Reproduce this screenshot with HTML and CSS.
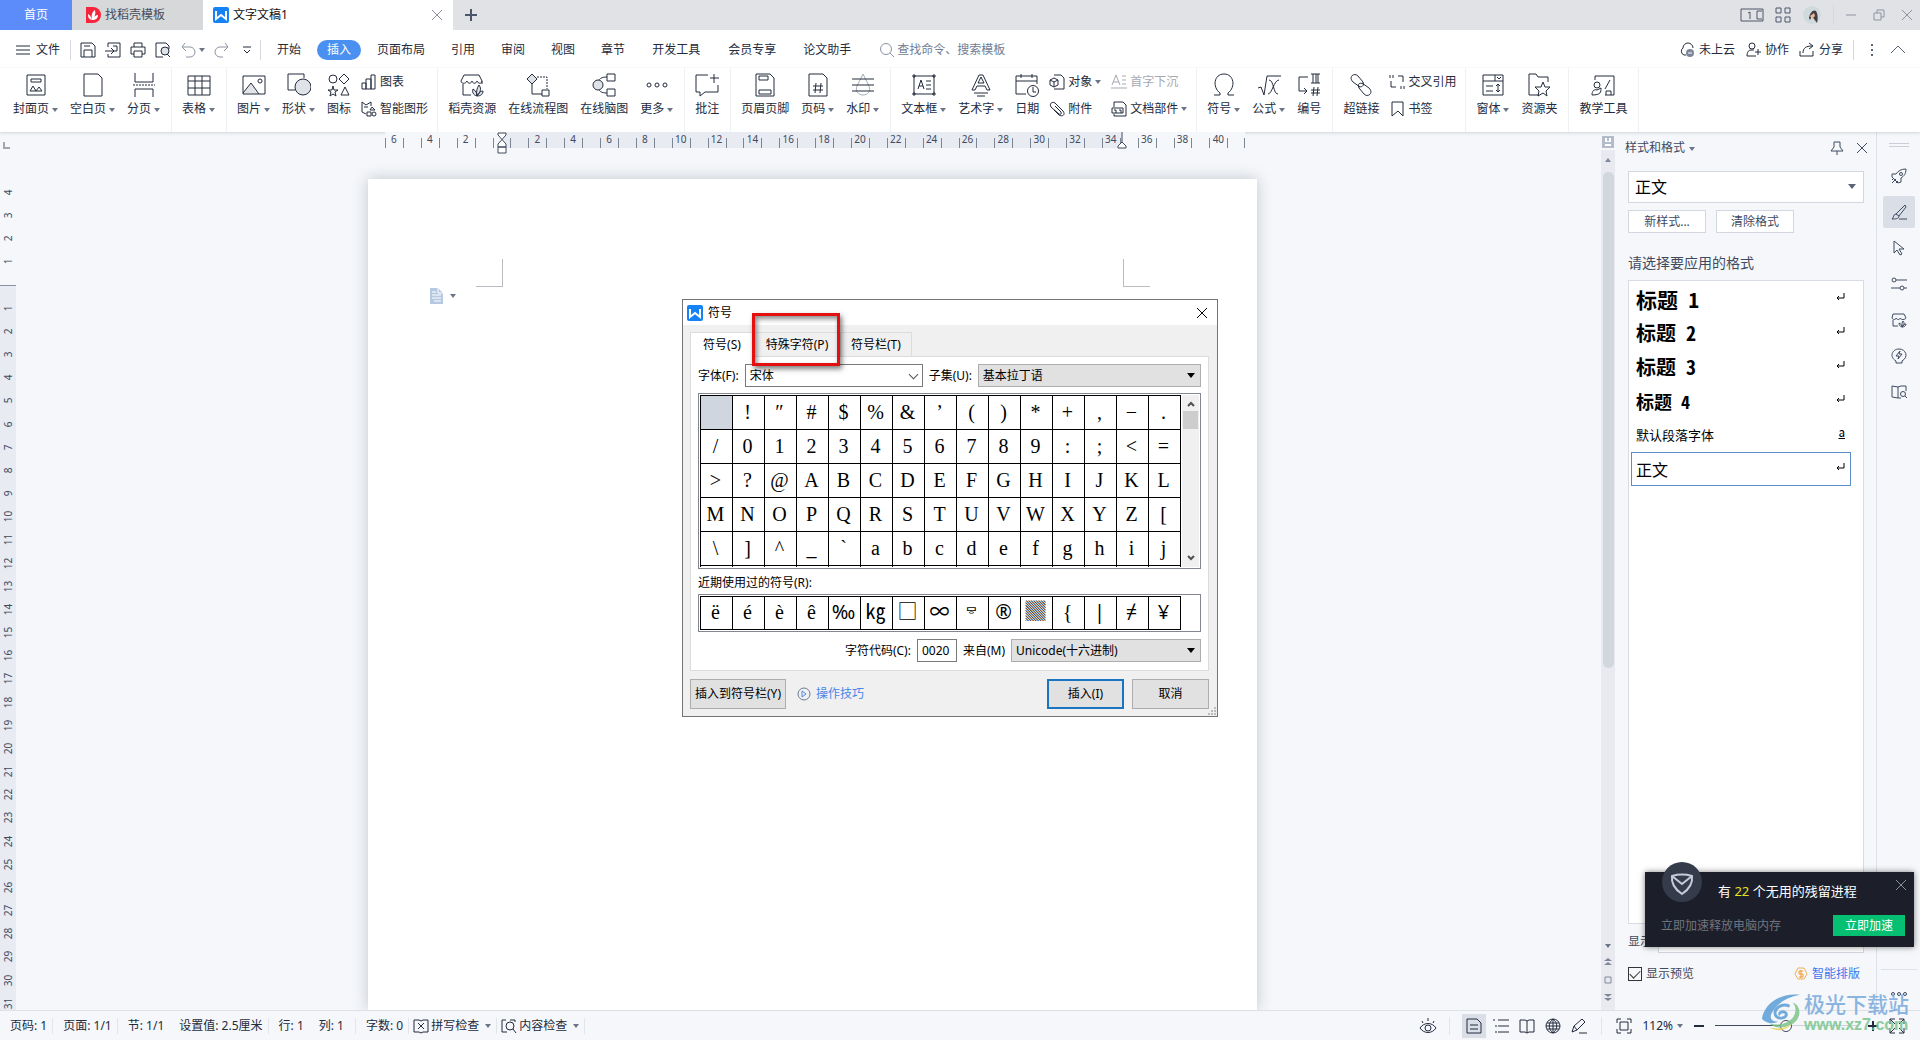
FILE: index.html
```html
<!DOCTYPE html>
<html lang="zh-CN">
<head>
<meta charset="utf-8">
<title>文字文稿1</title>
<link rel="stylesheet" href="styles.css">
</head>
<body>
<div class="app">
  <header class="titlebar">
    <button class="tab tab-home">首页</button>
    <button class="tab tab-docer"><svg class="i16" viewBox="0 0 16 16"><path d="M1 0h7a8 8 0 0 1 0 16H1z" fill="#f5263c"/><path d="M7 13C3 12 3 9 3 7c2 1 3 3 4 6C6 8 7 5 10 3c1 4 0 6-3 10 2-4 4-5 6-5 0 3-2 5-6 5z" fill="#fff"/></svg>找稻壳模板</button>
    <button class="tab tab-doc"><svg class="i16" viewBox="0 0 16 16"><rect width="16" height="16" rx="2" fill="#1583f5"/><path d="M3 4v8l5-4 5 4V4" fill="none" stroke="#fff" stroke-width="2"/></svg><span class="grow">文字文稿1</span><svg class="i12 dim" viewBox="0 0 12 12"><path d="M1 1l10 10M11 1L1 11"/></svg></button>
    <button class="tab tab-new" aria-label="新建"><svg class="i12" viewBox="0 0 12 12"><path d="M6 0v12M0 6h12" stroke-width="2"/></svg></button>
    <div class="window-tools">
      <svg class="i24" viewBox="0 0 24 16"><path d="M1 2h22v12H1zM8 6l2-1v7M22 4h-5v8h5"/></svg>
      <svg class="i16" viewBox="0 0 16 16"><path d="M1 1h5v5H1zM10 1h5v5h-5zM1 10h5v5H1zM10 10h5v5h-5z"/></svg>
      <svg class="i20" viewBox="0 0 20 20"><circle cx="10" cy="10" r="9" fill="#cfdadd" stroke="none"/><path d="M7 13c1-5 4-9 7-7 2 3 2 9 1 12l-3-4-2-3-2 4z" fill="#453a3d" stroke="none"/><path d="M8 11l4-3 1 3-3 3z" fill="#e6b9a3" stroke="none"/></svg>
      <i class="vline"></i>
      <svg class="i12 dim" viewBox="0 0 12 12"><path d="M1 6h10"/></svg>
      <svg class="i12 dim" viewBox="0 0 12 12"><path d="M1 4h7v7H1zM4 4V1h7v7H8"/></svg>
      <svg class="i12 dim" viewBox="0 0 12 12"><path d="M1 1l10 10M11 1L1 11"/></svg>
    </div>
  </header>

  <nav class="menubar">
    <button class="file"><svg class="i16" viewBox="0 0 16 16"><path d="M1 4h14M1 8h14M1 12h14"/></svg>文件</button>
    <i class="vline"></i>
    <div class="quick">
      <svg class="i16" viewBox="0 0 16 16"><path d="M1 1h11l3 3v11H1zM4 15V8h8v7M4 4h6"/></svg>
      <svg class="i16" viewBox="0 0 16 16"><path d="M3 5V1h12v14H3v-3M0 9h8M6 6l3 3-3 3M8 4h4v5H9"/></svg>
      <svg class="i16" viewBox="0 0 16 16"><path d="M4 5V1h8v4M4 12H1V5h14v7h-3M4 9h8v6H4z"/></svg>
      <svg class="i16" viewBox="0 0 16 16"><path d="M14 7V4l-3-3H1v14h7"/><circle cx="10" cy="9" r="4" fill="#dfe2e7"/><path d="M12 12l3 3"/></svg>
      <span class="undo"><svg class="i16 dim" viewBox="0 0 16 16"><path d="M5 1L2 5l4 4M2 5h8a5 5 0 0 1 0 10H6"/></svg><b class="caret"></b></span>
      <svg class="i16 dim" viewBox="0 0 16 16"><path d="M11 1l3 4-4 4M14 5H6a5 5 0 0 0 0 10h3"/></svg>
      <svg class="i8" viewBox="0 0 8 8"><path d="M0 1h8M1 4l3 3 3-3"/></svg>
    </div>
    <i class="vline"></i>
    <div class="menus">
      <button>开始</button><button class="on">插入</button><button>页面布局</button><button>引用</button><button>审阅</button><button>视图</button><button>章节</button><button class="wide">开发工具</button><button class="wide">会员专享</button><button>论文助手</button>
    </div>
    <label class="search"><svg class="i16" viewBox="0 0 16 16"><circle cx="7" cy="7" r="5.500"/><path d="M11 11l4 4"/></svg><input type="text" placeholder="查找命令、搜索模板"></label>
    <div class="share">
      <button><svg class="i16" viewBox="0 0 16 16"><path d="M5 13a4 4 0 0 1-1-7 5 5 0 0 1 10 0M5 13h2"/><circle cx="11" cy="11" r="4" fill="#7d879c" stroke="none"/><path d="M9 11h4" stroke="#fff"/></svg>未上云</button>
      <button><svg class="i16" viewBox="0 0 16 16"><circle cx="7" cy="4" r="3"/><path d="M9 8H6c-3 0-4 3-4 6h9M13 7v6M10 10h6"/></svg>协作</button>
      <button><svg class="i16" viewBox="0 0 16 16"><path d="M1 9v5h13V9M4 11c0-5 3-7 9-7M10 1l4 3-4 3"/></svg>分享</button>
      <i class="vline"></i>
      <svg class="i16" viewBox="0 0 16 16"><path d="M8 2v2M8 7v2M8 12v2" stroke-width="2"/></svg>
      <svg class="i16" viewBox="0 0 16 16"><path d="M1 11l7-7 7 7"/></svg>
    </div>
  </nav>

  <section class="ribbon">
    <div class="group">
      <button class="tool"><svg viewBox="0 0 24 24"><path d="M3 2h18v20H3zM7 6h10v3H7zM6 18l3-5 3 5zM12 18l3-4 3 4z"/></svg><span>封面页<b class="caret"></b></span></button>
      <button class="tool"><svg viewBox="0 0 24 24"><path d="M3 1h14l4 4v18H3z"/></svg><span>空白页<b class="caret"></b></span></button>
      <button class="tool"><svg viewBox="0 0 24 24"><path d="M3 0v9h18V0M3 24v-8h18v8"/><path d="M1 12h22" stroke-dasharray="2 1"/></svg><span>分页<b class="caret"></b></span></button>
    </div>
    <div class="group">
      <button class="tool"><svg viewBox="0 0 24 24"><path d="M1 3h22v19H1zM1 8h22M1 15h22M8 3v19M15 3v19"/></svg><span>表格<b class="caret"></b></span></button>
    </div>
    <div class="group">
      <button class="tool"><svg viewBox="0 0 24 24"><path d="M1 20l8-10 8 11" fill="#e3e5e8"/><path d="M1 3h22v18H1z"/><circle cx="18" cy="8" r="2"/></svg><span>图片<b class="caret"></b></span></button>
      <button class="tool"><svg viewBox="0 0 24 24"><path d="M8 17H1V1h16v4"/><circle cx="16" cy="14" r="8" fill="#dfe2e6"/></svg><span>形状<b class="caret"></b></span></button>
      <button class="tool"><svg viewBox="0 0 24 24"><circle cx="6" cy="6" r="4"/><path d="M17 1l5 5-5 5-5-5zM6 13l1 4h4l-3 2 1 4-3-2-3 2 1-4-3-2h4zM18 14l4 8h-8z"/></svg><span>图标</span></button>
      <div class="stack">
        <button><svg class="i16" viewBox="0 0 16 16"><path d="M1 9h4v6H1zM5 5h5v10H5zM10 1h4v14h-4z"/></svg>图表</button>
        <button><svg class="i16" viewBox="0 0 16 16"><path d="M1 11V1l4 3 5-3v4M1 11l4 2M3 6h4M11 6l-2 3h5zM6 11h4v4H6z"/><circle cx="13" cy="13" r="2"/></svg>智能图形</button>
      </div>
    </div>
    <div class="group">
      <button class="tool"><svg viewBox="0 0 24 24"><path d="M3 11v11h8M1 8l3-6h15l3 6c0 3-4 3-5 0-1 3-4 3-5 0-1 3-4 3-5 0-1 3-6 3-6 0M22 8v3"/><path d="M17 23c-4-1-5-4-4-7 3 2 4 4 4 7-1-5 0-8 2-11 3 4 1 8-2 11 2-4 4-5 6-5 0 3-2 5-6 5" fill="#dfe2e6"/></svg><span>稻壳资源</span></button>
      <button class="tool"><svg viewBox="0 0 24 24"><path d="M6 1l5 5-5 5-5-5z" fill="#dfe2e6"/><path d="M6 11v10h10M16 17h7v6h-7z"/><path d="M11 4h10v12" stroke-dasharray="2 1"/></svg><span>在线流程图</span></button>
      <button class="tool"><svg viewBox="0 0 24 24"><circle cx="6" cy="12" r="5" fill="#dfe2e6"/><path d="M15 1h8v7h-8zM15 16h8v7h-8zM15 4C9 4 8 6 7 7M15 20c-6 0-7-2-8-3"/></svg><span>在线脑图</span></button>
      <button class="tool"><svg viewBox="0 0 24 24"><circle cx="4" cy="12" r="2"/><circle cx="12" cy="12" r="2"/><circle cx="20" cy="12" r="2"/></svg><span>更多<b class="caret"></b></span></button>
    </div>
    <div class="group">
      <button class="tool"><svg viewBox="0 0 24 24"><path d="M13 2H1v17h4v4l5-4h13v-7M19 1v9M15 5h9"/></svg><span>批注</span></button>
    </div>
    <div class="group">
      <button class="tool"><svg viewBox="0 0 24 24"><path d="M3 1h14l4 4v18H3zM6 3h9v4H6zM6 17h12v4H6z"/></svg><span>页眉页脚</span></button>
      <button class="tool"><svg viewBox="0 0 24 24"><path d="M3 1h14l4 4v18H3zM10 10l-1 10M15 10l-1 10M7 13h10M7 17h10"/></svg><span>页码<b class="caret"></b></span></button>
      <button class="tool"><svg viewBox="0 0 24 24"><path d="M12 1l6 12c2 5-1 9-6 9s-8-4-6-9z" stroke="#a7acb5"/><path d="M1 6h22M1 12h22M1 18h22"/></svg><span>水印<b class="caret"></b></span></button>
    </div>
    <div class="group">
      <button class="tool"><svg viewBox="0 0 24 24"><path d="M2 3h20v18H2zM6 16l3-9 3 9M7 13h4M14 8h5M14 12h5M14 16h5"/><path d="M1 2h2v2H1zM21 2h2v2h-2zM1 20h2v2H1zM21 20h2v2h-2z"/></svg><span>文本框<b class="caret"></b></span></button>
      <button class="tool"><svg viewBox="0 0 24 24"><path d="M3 17L10 2h4l7 15h-3l-2-4H8l-2 4zM9 10h6l-3-6zM5 20h14M8 23h8"/></svg><span>艺术字<b class="caret"></b></span></button>
      <button class="tool"><svg viewBox="0 0 24 24"><path d="M11 21H1V3h21v8M1 8h21M6 1v4M17 1v4"/><circle cx="18" cy="18" r="5.500"/><path d="M18 14v5h3"/></svg><span>日期</span></button>
      <div class="stack">
        <button><svg class="i16" viewBox="0 0 16 16"><path d="M5 1h7l3 3v11H5M5 4l4 2v5l-4 2-4-2V6zM1 6l4 2 4-2M5 8v5"/></svg>对象<b class="caret"></b></button>
        <button><svg class="i16" viewBox="0 0 16 16"><path d="M6 5l6 6c1 2-1 3-2 2L2 6C0 3 3 0 6 2l8 8c3 4-1 6-4 4L5 9"/></svg>附件</button>
      </div>
      <div class="stack">
        <button class="off"><svg class="i16" viewBox="0 0 16 16"><path d="M1 11L5 1l4 10M2 8h6M11 2h4M11 6h4M11 10h4M0 14h16"/></svg>首字下沉</button>
        <button><svg class="i16" viewBox="0 0 16 16"><path d="M3 6V1h9l3 3v11H3v-2M1 7h11v5H1zM3 9h2v3M8 9h2v3"/></svg>文档部件<b class="caret"></b></button>
      </div>
    </div>
    <div class="group">
      <button class="tool"><svg viewBox="0 0 24 24"><path d="M2 22h6v-2C0 14 2 1 12 1s12 13 4 19v2h6"/></svg><span>符号<b class="caret"></b></span></button>
      <button class="tool"><svg viewBox="0 0 24 24"><path d="M1 15l3-1 3 8L10 3h14M11 21c4 0 6-14 11-14M12 7c5 0 4 14 9 14"/></svg><span>公式<b class="caret"></b></span></button>
      <button class="tool"><svg viewBox="0 0 24 24"><path d="M11 4H2v14h8M7 15l3 3-3 3M14 1h9M14 10h9M16 1v9M19 1v9M21 1v9M17 14l-1 9M21 14l-1 9M14 17h9M14 20h9"/></svg><span>编号</span></button>
    </div>
    <div class="group">
      <button class="tool"><svg viewBox="0 0 24 24"><path d="M11 14L4 9C-1 4 5-1 9 3l5 6c2 4-2 6-5 4M13 10l7 5c5 5-1 10-5 6l-5-6c-2-4 1-6 4-4"/></svg><span>超链接</span></button>
      <div class="stack">
        <button><svg class="i16" viewBox="0 0 16 16"><path d="M2 7v6h5M9 2h5v6M1 1v3M4 1v3M12 12v3M15 12v3"/></svg>交叉引用</button>
        <button><svg class="i16" viewBox="0 0 16 16"><path d="M3 1h11v14l-5-5-6 5z"/></svg>书签</button>
      </div>
    </div>
    <div class="group">
      <button class="tool"><svg viewBox="0 0 24 24"><path d="M2 2h20v20H2zM2 8h20M14 2v6M16 4l2 2 2-2M5 13h7M5 18h7M17 11v8M15 13l2-2 2 2M15 17l2 2 2-2"/></svg><span>窗体<b class="caret"></b></span></button>
      <button class="tool"><svg viewBox="0 0 24 24"><path d="M12 22H2V1h7l2 3h10v5M16 9l2 5h5l-4 4 1 5-4-3-5 3 1-5-4-4h6z"/></svg><span>资源夹</span></button>
    </div>
    <div class="group">
      <button class="tool"><svg viewBox="0 0 24 24"><path d="M4 7V3h19v19h-9M14 16l5-9M15 22v-4h5v4"/><circle cx="6" cy="12" r="3"/><path d="M1 22c0-4 2-6 5-5l4-2c0 4 0 7-9 7z"/></svg><span>教学工具</span></button>
    </div>
  </section>

  <main class="workspace">
    <div class="vruler">
      <svg class="tabstop" viewBox="0 0 8 8"><path d="M1 1v6h6" stroke="#a2a7af" stroke-width="2"/></svg>
      <div class="vnums"><span>4</span><span>3</span><span>2</span><span>1</span><span></span><span>1</span><span>2</span><span>3</span><span>4</span><span>5</span><span>6</span><span>7</span><span>8</span><span>9</span><span>10</span><span>11</span><span>12</span><span>13</span><span>14</span><span>15</span><span>16</span><span>17</span><span>18</span><span>19</span><span>20</span><span>21</span><span>22</span><span>23</span><span>24</span><span>25</span><span>26</span><span>27</span><span>28</span><span>29</span><span>30</span><span>31</span></div>
    </div>
    <div class="canvas">
      <div class="doc">
        <div class="hruler">
          <span>6</span><span></span><span>4</span><span></span><span>2</span><span></span><span></span><span></span><span>2</span><span></span><span>4</span><span></span><span>6</span><span></span><span>8</span><span></span><span>10</span><span></span><span>12</span><span></span><span>14</span><span></span><span>16</span><span></span><span>18</span><span></span><span>20</span><span></span><span>22</span><span></span><span>24</span><span></span><span>26</span><span></span><span>28</span><span></span><span>30</span><span></span><span>32</span><span></span><span>34</span><span></span><span>36</span><span></span><span>38</span><span></span><span>40</span><span></span>
          <svg class="mark mark-left" viewBox="0 0 10 22"><path d="M1 1h8v2L1 12v3h8v-3L1 3zM1 15h8v6H1z" fill="#fff"/></svg>
          <svg class="mark mark-right" viewBox="0 0 10 22"><path d="M5 0v10M5 10l-4 4v2h8v-2z" fill="#fff"/></svg>
        </div>
        <article class="page">
          <div class="margins"><i class="corner left"></i><i class="corner right"></i></div>
          <div class="section-mark"><svg viewBox="0 0 13 16"><path d="M0 0h8l5 5v11H0z" fill="#b7c9e2" stroke="none"/><path d="M2 4h4M2 7h9M2 10h9M4 13h7M8 0v5h5" stroke="#fff"/></svg><b class="caret"></b></div>
        </article>
      </div>
    </div>
    <div class="scroll">
      <svg class="i12" viewBox="0 0 12 12"><path d="M0 0h12v12H0z" fill="#b4bbca" stroke="none"/><path d="M3 2h2v3h2V2h2v4H3zM3 8h6v2H3z" fill="#fff" stroke="none"/></svg>
      <div class="track">
        <b class="caret up"></b>
        <div class="thumb"></div>
        <div class="scroll-tools"><b class="caret"></b><svg class="i8" viewBox="0 0 8 8"><path d="M4 0l4 3H0zM4 4l4 3H0z" fill="#7f889b" stroke="none"/></svg><svg class="i8" viewBox="0 0 8 8"><path d="M1 1h6v6H1z"/></svg><svg class="i8" viewBox="0 0 8 8"><path d="M0 0h8L4 3zM0 4h8L4 7z" fill="#7f889b" stroke="none"/></svg></div>
      </div>
    </div>
    <aside class="pane">
      <div class="pane-head"><span class="grow">样式和格式<b class="caret"></b></span><svg class="i14" viewBox="0 0 14 14"><path d="M4 1h6v5l3 4H1l3-4zM7 10v4"/></svg><svg class="i12" viewBox="0 0 12 12"><path d="M1 1l10 10M11 1L1 11"/></svg></div>
      <div class="pane-body">
        <span class="drop style-drop"><select aria-label="当前样式"><option>正文</option></select></span>
        <div class="pane-buttons"><button>新样式...</button><button>清除格式</button></div>
        <h2>请选择要应用的格式</h2>
        <ul class="styles">
          <li class="s1"><span>标题 1</span><svg viewBox="0 0 10 8"><path d="M9 0v5H2M4 3L2 5l2 2"/></svg></li>
          <li class="s2"><span>标题 2</span><svg viewBox="0 0 10 8"><path d="M9 0v5H2M4 3L2 5l2 2"/></svg></li>
          <li class="s3"><span>标题 3</span><svg viewBox="0 0 10 8"><path d="M9 0v5H2M4 3L2 5l2 2"/></svg></li>
          <li class="s4"><span>标题 4</span><svg viewBox="0 0 10 8"><path d="M9 0v5H2M4 3L2 5l2 2"/></svg></li>
          <li class="s5"><span>默认段落字体</span><u>a</u></li>
          <li class="s6"><span>正文</span><svg viewBox="0 0 10 8"><path d="M9 0v5H2M4 3L2 5l2 2"/></svg></li>
        </ul>
        <label class="show">显示:<span class="drop"><select><option>有效样式</option></select></span></label>
        <div class="pane-foot"><label><input type="checkbox" checked>显示预览</label><a href="#"><svg class="i14" viewBox="0 0 14 14"><path d="M4 1h6l3 6-3 5H4L1 7z" stroke="#efae5c"/><path d="M9 4H5v3h4v3H5M7 3v8" stroke="#f09a2c"/></svg>智能排版</a></div>
      </div>
    </aside>
    <div class="sidebar">
      <i class="handle"></i>
      <button aria-label="快捷"><svg class="i16" viewBox="0 0 16 16"><path d="M15 1c-5 0-8 2-10 5H1v3l6 6 3-1v-4c3-2 5-4 5-9zM1 12l2-2M1 15l4-4M5 15l2-2"/><circle cx="10" cy="6" r="1.500"/></svg></button>
      <button class="on" aria-label="样式"><svg class="i16" viewBox="0 0 16 16"><path d="M14 1l1 2-7 9-3-2zM5 10c-3 0-2 4-4 5 3 0 7 0 7-3M8 15h8"/></svg></button>
      <button aria-label="选择"><svg class="i16" viewBox="0 0 16 16"><path d="M3 1v12l3-3 3 5 2-1-3-5h5z"/></svg></button>
      <button aria-label="属性"><svg class="i16" viewBox="0 0 16 16"><circle cx="3" cy="4" r="2"/><path d="M5 4h11M0 12h9M13 12h3"/><circle cx="11" cy="12" r="2"/></svg></button>
      <button aria-label="稻壳"><svg class="i16" viewBox="0 0 16 16"><path d="M2 8v6h5M1 6l1-4h11l2 4M1 6c1 2 4 2 4 0 1 2 4 2 4 0 1 2 5 2 6 0M11 15c-3-1-3-3-3-4 2 1 3 2 3 4 0-3 0-5 1-6 2 2 1 5-1 6 1-2 2-3 4-3 0 2-2 3-4 3"/></svg></button>
      <button aria-label="帮助"><svg class="i16" viewBox="0 0 16 16"><path d="M5 13C-2 9 1 1 8 1s10 8 3 12v2H5zM9 3L5 8h3l-1 3 4-5H8z"/></svg></button>
      <button aria-label="阅读"><svg class="i16" viewBox="0 0 16 16"><path d="M7 14l-6-1V2l6 1v11h3M7 3l3-1h5v5"/><circle cx="12" cy="10" r="2.500"/><path d="M14 12l2 2"/></svg></button>
      <div class="sidebar-foot"><svg class="i16" viewBox="0 0 16 6"><circle cx="2" cy="3" r="1.500"/><circle cx="8" cy="3" r="1.500"/><circle cx="14" cy="3" r="1.500"/></svg></div>
    </div>
  </main>

  <footer class="status">
    <span class="cell">页码: 1</span><span class="cell">页面: 1/1</span><span class="cell pair"><span>节: 1/1</span><span>设置值: 2.5厘米</span></span><span class="cell pair places"><span>行: 1</span><span>列: 1</span></span><span class="cell count">字数: 0</span>
    <button class="cell"><svg class="i16" viewBox="0 0 16 16"><path d="M6 2H1v12h5l2 1 2-1h5V2h-5M6 2l2 1 2-1M5 5l6 6M11 5l-6 6"/></svg>拼写检查<b class="caret"></b></button>
    <button class="cell"><svg class="i16" viewBox="0 0 16 16"><path d="M5 2H1v12h5M9 2h5v2"/><circle cx="9" cy="8" r="4"/><path d="M12 11l3 4"/></svg>内容检查<b class="caret"></b></button>
    <div class="views">
      <svg class="i18" viewBox="0 0 18 18"><path d="M1 11c4-6 12-6 16 0-4 6-12 6-16 0zM3 4l1 2M9 1v3M15 4l-1 2"/><circle cx="9" cy="11" r="3"/></svg>
      <i class="vline"></i>
      <span class="view on"><svg class="i16" viewBox="0 0 16 16"><path d="M1 1h10l4 4v10H1zM4 7h8M4 11h8"/></svg></span>
      <svg class="i16" viewBox="0 0 16 16"><path d="M5 2h11M5 8h11M5 14h11M0 2h2M2 8h2M2 14h2"/></svg>
      <svg class="i16" viewBox="0 0 16 16"><path d="M8 3v12M8 3L6 2H1v12h5l2 1 2-1h5V2h-5z"/></svg>
      <svg class="i16" viewBox="0 0 16 16"><circle cx="8" cy="8" r="7"/><path d="M8 1v14M1 8h14M2 5h12M2 11h12M8 1c-5 4-5 10 0 14M8 1c5 4 5 10 0 14"/></svg>
      <svg class="i16" viewBox="0 0 16 16"><path d="M1 14l2-6 8-7 3 3-8 8zM3 8l3 4M8 15h8"/></svg>
      <i class="vline"></i>
      <svg class="i16" viewBox="0 0 16 16"><path d="M1 5V1h4M11 1h4v4M15 11v4h-4M5 15H1v-4M4 4h8v8H4z"/></svg>
      <button class="zoom">112%<b class="caret"></b></button>
      <svg class="i12" viewBox="0 0 12 12"><path d="M1 6h10" stroke-width="2"/></svg>
      <input class="slider" type="range" min="0" max="100" value="50" aria-label="缩放">
      <svg class="i12" viewBox="0 0 12 12"><path d="M6 1v10M1 6h10" stroke-width="2"/></svg>
      <svg class="i16" viewBox="0 0 16 16"><path d="M1 6V1h5M10 1h5v5M15 10v5h-5M6 15H1v-5M1 1l5 5M15 1l-5 5M15 15l-5-5M1 15l5-5"/></svg>
    </div>
  </footer>
</div>

<section class="dialog" role="dialog" aria-label="符号">
  <div class="dialog-title"><svg class="i16" viewBox="0 0 16 16"><rect width="16" height="16" rx="2" fill="#1583f5" stroke="none"/><path d="M3 4v8l5-4 5 4V4" stroke="#fff" stroke-width="2"/></svg><span class="grow">符号</span><svg class="i12" viewBox="0 0 12 12"><path d="M1 1l10 10M11 1L1 11"/></svg></div>
  <div class="dialog-body">
    <div class="dtabs"><button class="on">符号(S)</button><button class="mid">特殊字符(P)</button><button>符号栏(T)</button></div>
    <div class="panel">
      <div class="fields">
        <label for="font">字体(F):</label><span class="drop open"><select id="font"><option>宋体</option></select></span>
        <label for="subset">子集(U):</label><span class="drop gray grow"><select id="subset"><option>基本拉丁语</option></select></span>
      </div>
      <div class="chars">
        <div class="chars-clip"><table>
          <tr><td class="sel"></td><td>!</td><td>″</td><td>#</td><td>$</td><td>%</td><td>&amp;</td><td>’</td><td>(</td><td>)</td><td>*</td><td>+</td><td>,</td><td>−</td><td>.</td></tr>
          <tr><td>/</td><td>0</td><td>1</td><td>2</td><td>3</td><td>4</td><td>5</td><td>6</td><td>7</td><td>8</td><td>9</td><td>:</td><td>;</td><td>&lt;</td><td>=</td></tr>
          <tr><td>&gt;</td><td>?</td><td>@</td><td>A</td><td>B</td><td>C</td><td>D</td><td>E</td><td>F</td><td>G</td><td>H</td><td>I</td><td>J</td><td>K</td><td>L</td></tr>
          <tr><td>M</td><td>N</td><td>O</td><td>P</td><td>Q</td><td>R</td><td>S</td><td>T</td><td>U</td><td>V</td><td>W</td><td>X</td><td>Y</td><td>Z</td><td>[</td></tr>
          <tr><td>\</td><td>]</td><td>^</td><td>_</td><td>`</td><td>a</td><td>b</td><td>c</td><td>d</td><td>e</td><td>f</td><td>g</td><td>h</td><td>i</td><td>j</td></tr>
        </table></div>
        <div class="mini-scroll"><svg class="i8" viewBox="0 0 8 8"><path d="M1 6l3-3 3 3" stroke-width="2"/></svg><i></i><svg class="i8" viewBox="0 0 8 8"><path d="M1 2l3 3 3-3" stroke-width="2"/></svg></div>
      </div>
      <p class="recent-label">近期使用过的符号(R):</p>
      <div class="chars"><table>
        <tr><td>ë</td><td>é</td><td>è</td><td>ê</td><td class="sans">‰</td><td class="sans">㎏</td><td class="sans">□</td><td class="sans">∞</td><td class="small">ᄝ</td><td class="sans">®</td><td class="sans">▓</td><td>{</td><td class="sans">|</td><td class="sans">≠</td><td class="sans">¥</td></tr>
      </table></div>
      <div class="codes">
        <label for="code">字符代码(C):</label><input id="code" type="text" value="0020">
        <label for="from">来自(M)</label><span class="drop gray"><select id="from"><option>Unicode(十六进制)</option></select></span>
      </div>
    </div>
    <div class="actions">
      <button class="btn to-bar">插入到符号栏(Y)</button>
      <a href="#"><svg class="i14" viewBox="0 0 14 14"><circle cx="7" cy="7" r="6" stroke="#6e7c96"/><path d="M5 4l4 3-4 3z"/></svg>操作技巧</a>
      <button class="btn primary">插入(I)</button><button class="btn">取消</button>
    </div>
  </div>
  <svg class="grip" viewBox="0 0 8 8"><path d="M6 0h2v2H6zM3 3h2v2H3zM6 3h2v2H6zM0 6h2v2H0zM3 6h2v2H3zM6 6h2v2H6z" fill="#bcbcbc" stroke="none"/></svg>
  <i class="highlight"></i>
</section>

<section class="toast">
  <svg class="badge" viewBox="0 0 40 40"><circle cx="20" cy="20" r="20" fill="#343b4b" stroke="none"/><path d="M10 14c7-2 13-2 20 0 1 8-4 14-10 18-6-4-11-10-10-18zM10 14l10 8 10-8" stroke="#c6cbdb" stroke-width="2"/></svg>
  <svg class="i12 toast-close" viewBox="0 0 12 12"><path d="M1 1l10 10M11 1L1 11"/></svg>
  <p class="toast-title">有 <em>22</em> 个无用的残留进程</p>
  <div class="toast-row"><span>立即加速释放电脑内存</span><button>立即加速</button></div>
</section>

<div class="watermark">
  <svg viewBox="0 0 44 40"><path d="M41 2C20-1 3 12 1 27c4 5 12 6 17 3C9 30 8 24 14 17 20 9 29 4 41 2z" fill="#5a9ed6" stroke="none"/><path d="M33 10c9 3 10 15 1 22-8 5-20 6-25 0 9 3 20 0 25-7 3-5 3-11-1-15z" fill="#7fc48c" stroke="none"/><path d="M30 14c-9-4-17 3-15 9 3 6 14 3 11-2-3-3-8 0-6 2" stroke="#5a9ed6" stroke-width="3"/><path d="M8 36c12 3 20 0 26-5-7 8-15 11-26 5z" fill="#e8d35a" stroke="none"/></svg>
  <div><strong>极光下载站</strong><span>www.xz7.com</span></div>
</div>
</body>
</html>
```
FILE: styles.css
```css
* { box-sizing: border-box; }
html, body { height: 100%; }
body {
  margin: 0;
  overflow: hidden;
  background: #f5f7fa;
  color: #232b3d;
  font: 12px/16px "Noto Sans", "Noto Sans CJK SC", sans-serif;
}
button, input, select { font: inherit; color: inherit; }
button { margin: 0; padding: 0; border: 0; background: none; white-space: nowrap; }
a { text-decoration: none; color: #4a86e8; }
p, h2, ul { margin: 0; padding: 0; }
svg { display: block; flex: none; fill: none; stroke: currentColor; stroke-width: 1; }
.tab svg rect { stroke: none; }
.i8 { width: 8px; height: 8px; }
.i12 { width: 12px; height: 12px; }
.i14 { width: 14px; height: 14px; }
.i16 { width: 16px; height: 16px; }
.i18 { width: 18px; height: 18px; }
.i20 { width: 20px; height: 20px; }
.i24 { width: 24px; height: 16px; }
.dim { color: #8d939f; }
.grow { flex: 1; }
.caret {
  display: inline-block;
  flex: none;
  width: 0;
  margin-left: 4px;
  border: 3px solid transparent;
  border-top: 4px solid #6c7588;
  border-bottom: 0;
  vertical-align: middle;
}
.caret.up { border-top: 0; border-bottom: 4px solid #7f889b; margin: 0; }
.vline { flex: none; width: 1px; height: 20px; background: #d5d8de; }

.app { display: flex; flex-direction: column; height: 100vh; }

/* title bar */
.titlebar { display: flex; height: 30px; background: #e1e2e6; }
.tab { display: flex; align-items: center; gap: 4px; }
.tab-home { justify-content: center; width: 72px; background: #5b8cf9; color: #fff; }
.tab-docer { width: 131px; padding-left: 13px; background: #d7d8da; color: #454c5c; }
.tab-docer svg, .tab-doc svg:first-child { stroke: none; }
.tab-doc svg:first-child path { stroke: #fff; }
.tab-doc { width: 250px; padding: 0 10px; background: #fff; color: #111; text-align: left; }
.tab-new { padding: 0 12px; color: #4c566b; }
.window-tools { display: flex; align-items: center; gap: 16px; margin-left: auto; padding-right: 7px; color: #4c566b; }
.window-tools > :nth-child(-n+4) { margin-right: -5px; }

/* menu bar */
.menubar { display: flex; align-items: center; height: 38px; padding: 1px 0 0 15px; background: #fff; }
.file { display: flex; align-items: center; gap: 5px; margin-right: 10px; }
.quick { display: flex; align-items: center; gap: 9px; padding: 0 9px; }
.undo { display: flex; align-items: center; }
.undo .caret { margin-left: 3px; }
.quick > .i8 { margin-left: 4px; }
.menus { display: flex; align-items: center; padding-left: 3px; }
.menus button { height: 20px; margin: 0 3px; padding: 0 10px; border-radius: 10px; }
.menus button.wide { padding: 0 11px; }
.menus .on { background: #4a90f0; color: #fff; }
.search { display: flex; align-items: center; gap: 2px; margin-left: 15px; color: #8a94a8; }
.search input { width: 130px; padding: 0; border: 0; outline: 0; background: none; }
.search input::placeholder { color: #717d94; opacity: 1; }
.share { display: flex; align-items: center; gap: 10px; margin-left: auto; padding-right: 14px; }
.share button { display: flex; align-items: center; gap: 4px; }
.share > svg { color: #59647a; }

/* ribbon */
.ribbon { display: flex; position: relative; height: 64px; padding-left: 3px; background: #fff; box-shadow: 0 1px 3px rgba(60, 70, 90, .2); }
.group { display: flex; align-items: flex-start; gap: 12px; padding: 5px 11px 0 10px; border-right: 1px solid #eef0f2; }
.tool { display: flex; flex-direction: column; align-items: center; gap: 4px; }
.tool > svg { width: 24px; height: 24px; }
.tool > span { display: block; }
.tool .caret { margin-left: 3px; }
.stack { display: flex; flex-direction: column; gap: 10px; margin: 0 -2px; }
.stack + .stack { margin-left: 0; }
.stack button { display: flex; align-items: center; gap: 3px; height: 17px; }
.stack .caret { margin-left: 0; }
.off { color: #a5a9b1; }

/* workspace */
.workspace { display: flex; flex: 1; min-height: 0; }
.vruler { display: flex; flex-direction: column; width: 16px; padding-top: 9px; overflow: hidden; color: #3f4a5f; font-size: 10px; }
.tabstop { width: 8px; height: 8px; margin: 0 0 32px 3px; }
.vnums { display: grid; flex: none; grid-auto-rows: 1fr; height: 834px; background: linear-gradient(#f5f7fa 104px, #8a92a1 104px, #8a92a1 105px, #e8ebf1 105px); }
.vnums span { display: flex; align-items: center; justify-content: center; writing-mode: vertical-rl; transform: rotate(180deg); }
.canvas { display: flex; flex: 1; justify-content: center; padding-left: 8px; overflow: hidden; }
.doc { display: flex; flex-direction: column; gap: 31px; width: 889px; }
.hruler { display: flex; position: relative; height: 16px; margin: 0 12px 0 17px; background: linear-gradient(90deg, #f5f7fa 117px, #e8ebf1 117px, #e8ebf1 737px, #f5f7fa 737px); color: #3f4a5f; font-size: 10px; line-height: 14px; text-align: center; }
.hruler span { flex: 1 1 0; min-width: 0; background: linear-gradient(#7d8695, #7d8695) 0 100% / 1px 10px no-repeat; }
.hruler span:nth-of-type(48) { background: linear-gradient(#7d8695, #7d8695) 0 100% / 1px 10px no-repeat, linear-gradient(#7d8695, #7d8695) 100% 100% / 1px 10px no-repeat; }
.mark { position: absolute; top: 0; width: 10px; height: 22px; }
.mark-left { left: 112px; }
.mark-right { left: 732px; }
.page { flex: 1; background: #fff; box-shadow: 0 0 14px rgba(40, 50, 70, .25); }
.margins { display: flex; justify-content: space-between; padding: 80px 107px 0 108px; }
.corner { width: 27px; height: 28px; border: 0 solid #b9bcc1; border-bottom-width: 1px; }
.corner.left { border-right-width: 1px; }
.corner.right { border-left-width: 1px; }
.section-mark { display: flex; align-items: center; gap: 3px; padding: 1px 0 0 62px; }
.section-mark svg { width: 13px; height: 16px; }
.scroll { display: flex; flex-direction: column; align-items: center; width: 14px; padding-top: 4px; }
.track { display: flex; flex: 1; flex-direction: column; align-items: center; width: 14px; margin-top: 2px; padding-top: 8px; background: #e8eaf0; color: #7f889b; }
.thumb { flex: 0 1 496px; width: 11px; margin-top: 10px; border-radius: 5px; background: #d2d6dd; }
.scroll-tools { display: flex; flex-direction: column; align-items: center; gap: 10px; margin-top: auto; padding-bottom: 8px; }
.scroll-tools .caret { margin: 0; }

/* style pane */
.pane { display: flex; flex-direction: column; width: 262px; border-right: 1px solid #dde1e8; color: #3f4a60; }
.pane-head { display: flex; align-items: center; gap: 12px; height: 32px; padding: 0 8px 0 10px; }
.pane-body { display: flex; flex: 1; flex-direction: column; padding: 7px 12px 0 13px; }
.drop { display: flex; position: relative; }
.drop::after { content: ""; position: absolute; right: 6px; top: 50%; margin-top: -3px; border: 4px solid transparent; border-top: 5px solid #59647a; border-bottom: 0; pointer-events: none; }
.drop select { flex: 1; width: 100%; padding: 0 4px; border: 1px solid #d3d8e0; border-radius: 0; outline: 0; background: #fff; appearance: none; }
.style-drop { height: 32px; }
.style-drop select { padding-left: 6px; font-size: 16px; color: #000; }
.style-drop::after { right: 8px; }
.pane-buttons { display: flex; gap: 10px; margin-top: 7px; }
.pane-buttons button { width: 78px; height: 23px; border: 1px solid #d3d8e0; background: #fff; }
.pane h2 { margin-top: 20px; font-size: 14px; font-weight: 400; line-height: 20px; }
.styles { flex: 1; margin-top: 7px; padding: 1px 12px 0 2px; border: 1px solid #d8dce4; background: #fff; list-style: none; color: #000; }
.styles li { display: flex; justify-content: space-between; height: 34px; padding: 0 5px 0 4px; border: 1px solid transparent; line-height: 32px; font-weight: 700; font-family: "Noto Sans Mono CJK SC", "Noto Sans CJK SC", sans-serif; }
.styles svg { width: 10px; height: 8px; margin-top: 10px; }
.styles u { margin-top: -3px; }
.styles .s1 { font-size: 21px; }
.styles .s2, .styles .s3 { font-size: 20px; }
.styles .s4 { font-size: 18px; }
.styles .s5 { font-size: 13px; font-weight: 400; }
.styles .s6 { border-color: #5b8ccb; font-size: 16px; font-weight: 400; }
.show { display: flex; align-items: center; gap: 3px; margin-top: 7px; }
.show .drop { flex: 1; height: 22px; }
.pane-foot { display: flex; align-items: center; justify-content: space-between; padding: 13px 4px 28px 0; }
.pane-foot label, .pane-foot a { display: flex; align-items: center; gap: 4px; }
.pane-foot a { color: #3b76ef; }
.pane-foot input { display: grid; place-items: center; appearance: none; width: 14px; height: 14px; margin: 0; border: 1px solid #333; }
.pane-foot input:checked::before { content: ""; width: 5px; height: 9px; margin-bottom: 2px; border: solid #333; border-width: 0 1px 1px 0; transform: rotate(45deg); }

.sidebar { display: flex; flex-direction: column; align-items: center; gap: 4px; width: 43px; color: #3f4a60; }
.handle { width: 20px; height: 4px; margin: 11px 0 9px; border: 1px solid #c9ced7; border-width: 1px 0; }
.sidebar button { display: grid; place-items: center; width: 32px; height: 32px; border-radius: 2px; }
.sidebar button.on { background: #d9dee7; }
.sidebar-foot { margin-top: auto; padding: 16px 10px 8px; border-top: 1px solid #dde1e8; }

/* status bar */
.status { display: flex; align-items: center; height: 30px; border-top: 1px solid #dde1e6; }
.cell { display: flex; align-items: center; gap: 2px; padding: 0 5px 0 10px; border-right: 1px solid #e2e5ea; white-space: nowrap; }
button.cell { padding: 0 5px 0 4px; }
.pair { gap: 15px; }
.places { padding-right: 11px; }
.views { display: flex; align-items: center; gap: 10px; margin-left: auto; padding-right: 15px; }
.view { display: grid; place-items: center; width: 24px; height: 24px; margin-right: -3px; background: #d9dee7; }
.views .vline { margin: 0 4px; height: 18px; background: #e2e5ea; }
.views .vline:first-of-type { margin: 0 2px; }
.zoom { display: flex; align-items: center; }
.slider { appearance: none; width: 142px; height: 14px; margin: 0; background: linear-gradient(90deg, #3f4a60 50%, #ccd2dc 50%) 0 6px / 100% 1px no-repeat; }
.slider::-webkit-slider-thumb { appearance: none; width: 12px; height: 12px; border: 1px solid #3f4a60; border-radius: 50%; background: #fff; }

/* symbol dialog */
.dialog { position: absolute; left: 682px; top: 299px; width: 536px; border: 1px solid #72757a; background: #f0f0f0; color: #000; }
.dialog-title { display: flex; align-items: center; gap: 5px; height: 25px; padding: 0 9px 0 4px; background: #fff; }
.dialog-body { padding: 7px 8px 7px 7px; }
.dtabs { display: flex; }
.dtabs button { height: 24px; padding: 0 10px; border: 1px solid #dcdcdc; border-bottom: 0; border-left: 0; }
.dtabs .on { position: relative; width: 64px; height: 25px; margin-bottom: -1px; border-left: 1px solid #dcdcdc; background: #fff; }
.dtabs .mid { width: 87px; }
.panel { padding: 7px 7px 8px; border: 1px solid #dcdcdc; background: #fff; }
.fields, .codes { display: flex; align-items: center; height: 23px; gap: 6px; white-space: nowrap; }
.fields .drop, .codes .drop { height: 23px; }
.fields .open { width: 178px; }
.dialog select { border-color: #7a7a7a; }
.dialog .gray select { border-color: #adadad; background: #e1e1e1; }
.dialog .drop::after { border-top-color: #000; }
.dialog .open::after { right: 6px; width: 6px; height: 6px; margin-top: -5px; border: solid #555; border-width: 0 1px 1px 0; transform: rotate(45deg); }
.chars { display: flex; justify-content: space-between; padding: 1px; border: 1px solid #828790; }
.fields + .chars { margin-top: 6px; }
.chars-clip { height: 172px; overflow: hidden; background: repeating-linear-gradient(90deg, #000 0 1px, #fff 1px 32px) 0 100% / 481px 3px no-repeat; }
.chars table { width: 481px; border-collapse: collapse; table-layout: fixed; font: 20px/24px "Liberation Serif", "Noto Sans CJK SC", serif; }
.chars td { height: 34px; padding: 0 2px 2px 0; border: 1px solid #000; text-align: center; }
.chars .sel { background: #d0d6df; }
.chars .sans { font-family: "Noto Sans", "Noto Sans CJK SC", sans-serif; }
.chars .small { font: 14px/24px "Noto Sans CJK KR", sans-serif; }
.mini-scroll { display: flex; flex-direction: column; align-items: center; width: 17px; padding: 5px 0; background: #f0f0f0; color: #505050; }
.mini-scroll i { width: 15px; height: 18px; margin: 3px 0 auto; background: #cdcdcd; }
.recent-label { margin: 6px 0 3px; }
.recent-label + .chars td { height: 33px; }
.codes { justify-content: flex-end; margin-top: 7px; }
.codes input { width: 40px; height: 23px; padding: 0 4px; border: 1px solid #7a7a7a; outline: 0; }
.codes .drop { width: 190px; }
.actions { display: flex; align-items: center; gap: 8px; margin-top: 8px; }
.btn { width: 77px; height: 30px; border: 1px solid #adadad; background: #e1e1e1; }
.to-bar { width: 96px; }
.primary { border: 2px solid #1a74bf; }
.actions a { display: flex; align-items: center; gap: 5px; margin: 0 auto 0 3px; color: #4a86e8; }
.grip { position: absolute; right: 1px; bottom: 1px; width: 8px; height: 8px; }
.highlight { position: absolute; left: 69px; top: 13px; width: 88px; height: 53px; border: 3px solid #e3100f; box-shadow: 2px 3px 5px rgba(0, 0, 0, .5), inset 2px 3px 5px rgba(0, 0, 0, .45); pointer-events: none; }

/* accelerator toast */
.toast { position: absolute; right: 6px; bottom: 93px; width: 269px; padding: 11px 9px 11px 16px; background: #1c1f2a; box-shadow: 0 0 6px rgba(0, 0, 0, .5); color: #fff; }
.badge { position: absolute; left: 17px; top: -10px; width: 40px; height: 40px; }
.toast-close { position: absolute; right: 7px; top: 7px; color: #8a8f9c; }
.toast-title { padding-left: 57px; font-size: 13px; }
.toast em { font-style: normal; color: #e8e020; }
.toast-row { display: flex; align-items: center; justify-content: space-between; margin-top: 16px; color: #70747f; }
.toast-row button { width: 72px; height: 21px; background: #05c073; color: #fff; }

.watermark { display: flex; position: absolute; right: 11px; bottom: 6px; gap: 1px; opacity: .85; pointer-events: none; }
.watermark svg { width: 42px; height: 40px; }
.watermark strong, .watermark span { display: block; }
.watermark strong { font-size: 21px; line-height: 24px; font-weight: 500; color: #78a9dc; }
.watermark span { font: 700 16px/18px "Liberation Sans", sans-serif; color: #79c58d; }
```
